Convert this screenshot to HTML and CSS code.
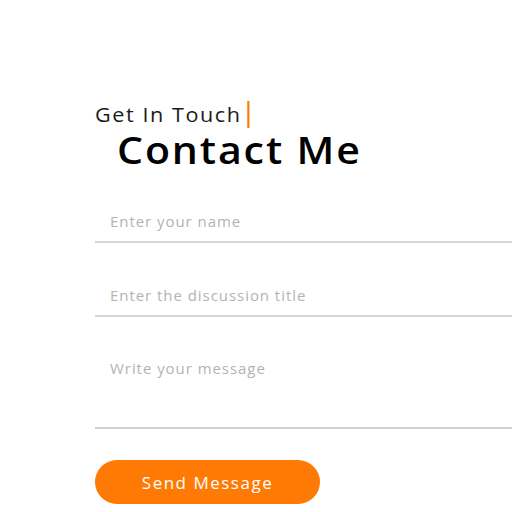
FILE: index.html
```html
<!DOCTYPE html>
<html lang="en">
<head>
<meta charset="utf-8">
<title>Contact Me</title>
<link rel="stylesheet" href="styles.css">
</head>
<body>
<section class="contact">
  <div class="eyebrow"><span class="eyebrow-text">Get In Touch</span></div>
  <h1 class="title">Contact Me</h1>
  <form class="form">
    <input class="field field-name" type="text" placeholder="Enter your name">
    <input class="field field-title" type="text" placeholder="Enter the discussion title">
    <textarea class="field field-message" placeholder="Write your message"></textarea>
    <button class="send" type="button">Send Message</button>
  </form>
</section>
</body>
</html>
```
FILE: styles.css
```css
html, body {
  margin: 0;
  padding: 0;
  background: #ffffff;
  overflow: hidden;
}
body {
  font-family: "Open Sans", "Noto Sans", sans-serif;
}
.contact {
  padding: 101px 0 0 95px;
}
.eyebrow {
  height: 27px;
}
.eyebrow-text {
  display: inline-block;
  font-size: 20px;
  line-height: 27px;
  letter-spacing: 1.45px;
  color: #1b1b1b;
  padding-right: 5px;
  border-right: 2px solid #ff7a05;
  transform: scaleX(1.08);
  transform-origin: left center;
}
.title {
  display: inline-block;
  margin: 1px 0 0 22px;
  font-size: 38px;
  line-height: 40px;
  font-weight: 600;
  letter-spacing: 1.75px;
  color: #000000;
  transform: scaleX(1.08);
  transform-origin: left center;
}
.form {
  display: flex;
  flex-direction: column;
  align-items: flex-start;
  width: calc(100vw - 95px);
  margin-top: 32px;
}
.field {
  box-sizing: border-box;
  width: 100%;
  border: none;
  border-bottom: 2px solid #d6d6d6;
  outline: none;
  background: transparent;
  font-family: inherit;
  font-size: 15px;
  letter-spacing: 0.95px;
  color: #333;
  padding: 0 15px;
  margin: 0;
}
.field::placeholder {
  color: #b3b3b3;
}
.field-name {
  height: 42px;
}
.field-title {
  height: 42px;
  margin-top: 32px;
}
.field-message {
  height: 82px;
  margin-top: 30px;
  padding-top: 11px;
  line-height: 20px;
  resize: none;
  border-bottom-color: #cfcfcf;
}
.send {
  margin-top: 31px;
  width: 225px;
  height: 44px;
  border: none;
  border-radius: 22px;
  background: #ff7a05;
  color: #ffffff;
  font-family: inherit;
  font-size: 17px;
  letter-spacing: 1.5px;
  padding: 0;
}
```
